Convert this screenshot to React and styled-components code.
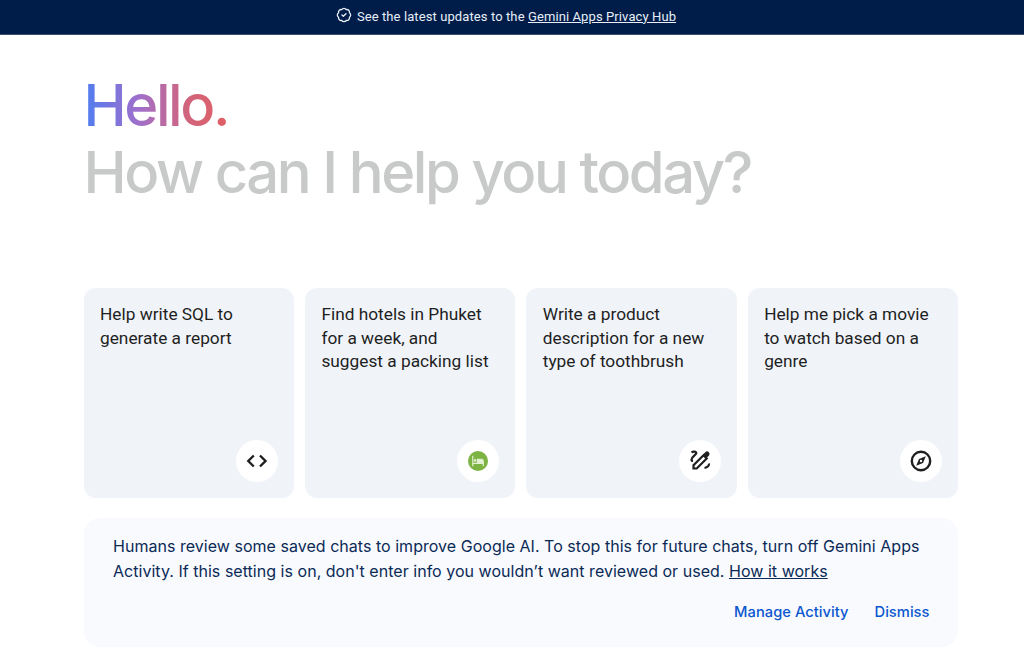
import React from 'react';
import styled, { createGlobalStyle } from 'styled-components';
import { BadgeCheck } from 'lucide-react';

const GlobalStyle = createGlobalStyle`
  html, body {
    margin: 0;
    padding: 0;
    background: #fff;
    font-family: Roboto, "Liberation Sans", sans-serif;
  }
`;

const Page = styled.div`
  width: 1024px;
  height: 647px;
  overflow: hidden;
  display: flex;
  flex-direction: column;
`;

const Banner = styled.div`
  height: 35px;
  box-sizing: border-box;
  flex: none;
  background: #001d4a;
  border-bottom: 1px solid #3a5070;
  color: #e8eef7;
  display: flex;
  align-items: center;
  justify-content: center;
  gap: 5px;
  padding: 0 12px 2px 0;
  font-size: 13px;
  letter-spacing: 0.1px;
  a {
    color: inherit;
    text-decoration: underline;
  }
  svg {
    margin-bottom: 3px;
  }
`;

const Main = styled.main`
  flex: 1;
  padding: 37px 66px 0 83.5px;
  display: flex;
  flex-direction: column;
`;

const Headline = styled.h1`
  margin: 0;
  font-family: Inter, sans-serif;
  font-weight: 550;
  font-size: 58px;
  line-height: 67px;
  letter-spacing: -2.42px;
  color: #c8caca;
`;

const Hello = styled.span`
  display: inline-block;
  background: linear-gradient(90deg, #4f7df0 0%, #a06fcb 38%, #d0657f 70%, #e05e62 100%);
  -webkit-background-clip: text;
  background-clip: text;
  color: transparent;
`;

const Cards = styled.div`
  margin-top: 82px;
  display: grid;
  grid-template-columns: repeat(4, 1fr);
  gap: 11px;
`;

const Card = styled.div`
  height: 210px;
  box-sizing: border-box;
  padding: 15px 16px 16.5px 16.5px;
  border-radius: 12px;
  background: #f0f4f9;
  display: flex;
  flex-direction: column;
  justify-content: space-between;
  color: #1f1f1f;
  font-size: 17.3px;
  line-height: 23.5px;
`;

const IconCircle = styled.div`
  align-self: flex-end;
  width: 42px;
  height: 42px;
  border-radius: 50%;
  background: #fff;
  display: flex;
  align-items: center;
  justify-content: center;
`;

const HotelBadge = styled.div`
  width: 20px;
  height: 20px;
  border-radius: 50%;
  background: #7cb342;
  display: flex;
  align-items: center;
  justify-content: center;
`;

const Notice = styled.section`
  margin-top: 19.5px;
  height: 129.5px;
  box-sizing: border-box;
  padding: 16.5px 28.5px 0 29.5px;
  border-radius: 16px;
  background: #f8fafd;
  color: #0b2a57;
  font-family: Inter, sans-serif;
  font-size: 16px;
  letter-spacing: 0.03px;
  line-height: 24.5px;
  a {
    color: inherit;
    text-decoration: underline;
  }
`;

const Actions = styled.div`
  display: flex;
  justify-content: flex-end;
  gap: 26px;
  margin-top: 17px;
`;

const ActionLink = styled.span`
  color: #0b57d0;
  font-size: 14.7px;
  font-weight: 500;
`;

const CodeIcon = () => (
  <svg width="24" height="24" viewBox="0 0 24 24" fill="none" stroke="#1f1f1f" strokeWidth="2.4">
    <path d="M8.8 6.5L3.3 12l5.5 5.500M15 6.500L20.500 12 15 17.500" />
  </svg>
);

const BedIcon = () => (
  <svg width="14" height="14" viewBox="0 0 24 24" fill="none" stroke="#e3f0d2" strokeWidth="2">
    <path d="M3 3v18M3 16h18v5" />
    <path d="M21 16v-4a3 3 0 0 0-3-3h-7v7z" fill="#e3f0d2" />
    <rect x="5" y="9" width="4" height="4" fill="#e3f0d2" stroke="none" />
  </svg>
);

const PenIcon = () => (
  <svg width="24" height="24" viewBox="0 0 24 24" fill="none" stroke="#1f1f1f" strokeWidth="2.2">
    <path d="M3.500 3.500c1.500-1.200 5-1.200 4.800.8C8 6 3.500 8 3.500 10.500c0 1 .5 1.500 1.500 1.500" />
    <path d="M5.500 19.500v-3.200L15.500 6.300l3.200 3.200-10 10z" />
    <path d="M15 5.500l2.300-2.300a2.300 2.300 0 0 1 3.500 3.500L18.500 9z" fill="#1f1f1f" stroke="none" />
    <path d="M20.800 14.500c.8 2-1.300 4-4.300 4.500" />
  </svg>
);

const CompassIcon = () => (
  <svg width="24" height="24" viewBox="0 0 24 24" fill="none" stroke="#1f1f1f" strokeWidth="2.4">
    <circle cx="12" cy="12" r="9.200" />
    <path d="M16.800 7.200l-2.800 6.800-6.800 2.800 2.800-6.800z" fill="#1f1f1f" stroke="none" />
    <circle cx="12" cy="12" r="1.200" fill="#fff" stroke="none" />
  </svg>
);

const suggestions = [
  { text: <>Help write SQL to<br />generate a report</>, icon: <CodeIcon /> },
  { text: <>Find hotels in Phuket<br />for a week, and<br />suggest a packing list</>, icon: <HotelBadge><BedIcon /></HotelBadge> },
  { text: <>Write a product<br />description for a new<br />type of toothbrush</>, icon: <PenIcon /> },
  { text: <>Help me pick a movie<br />to watch based on a<br />genre</>, icon: <CompassIcon /> },
];

export default function App() {
  return (
    <Page>
      <GlobalStyle />
      <Banner>
        <BadgeCheck size={16} strokeWidth={2} />
        <span>See the latest updates to the <a href="#hub">Gemini Apps Privacy Hub</a></span>
      </Banner>
      <Main>
        <Headline>
          <Hello>Hello.</Hello>
          <br />
          How can I help you today?
        </Headline>
        <Cards>
          {suggestions.map((item, i) => (
            <Card key={i}>
              <div>{item.text}</div>
              <IconCircle>{item.icon}</IconCircle>
            </Card>
          ))}
        </Cards>
        <Notice>
          Humans review some saved chats to improve Google AI. To stop this for future chats, turn off Gemini Apps
          <br />
          Activity. If this setting is on, don't enter info you wouldn’t want reviewed or used. <a href="#how">How it works</a>
          <Actions>
            <ActionLink>Manage Activity</ActionLink>
            <ActionLink>Dismiss</ActionLink>
          </Actions>
        </Notice>
      </Main>
    </Page>
  );
}
